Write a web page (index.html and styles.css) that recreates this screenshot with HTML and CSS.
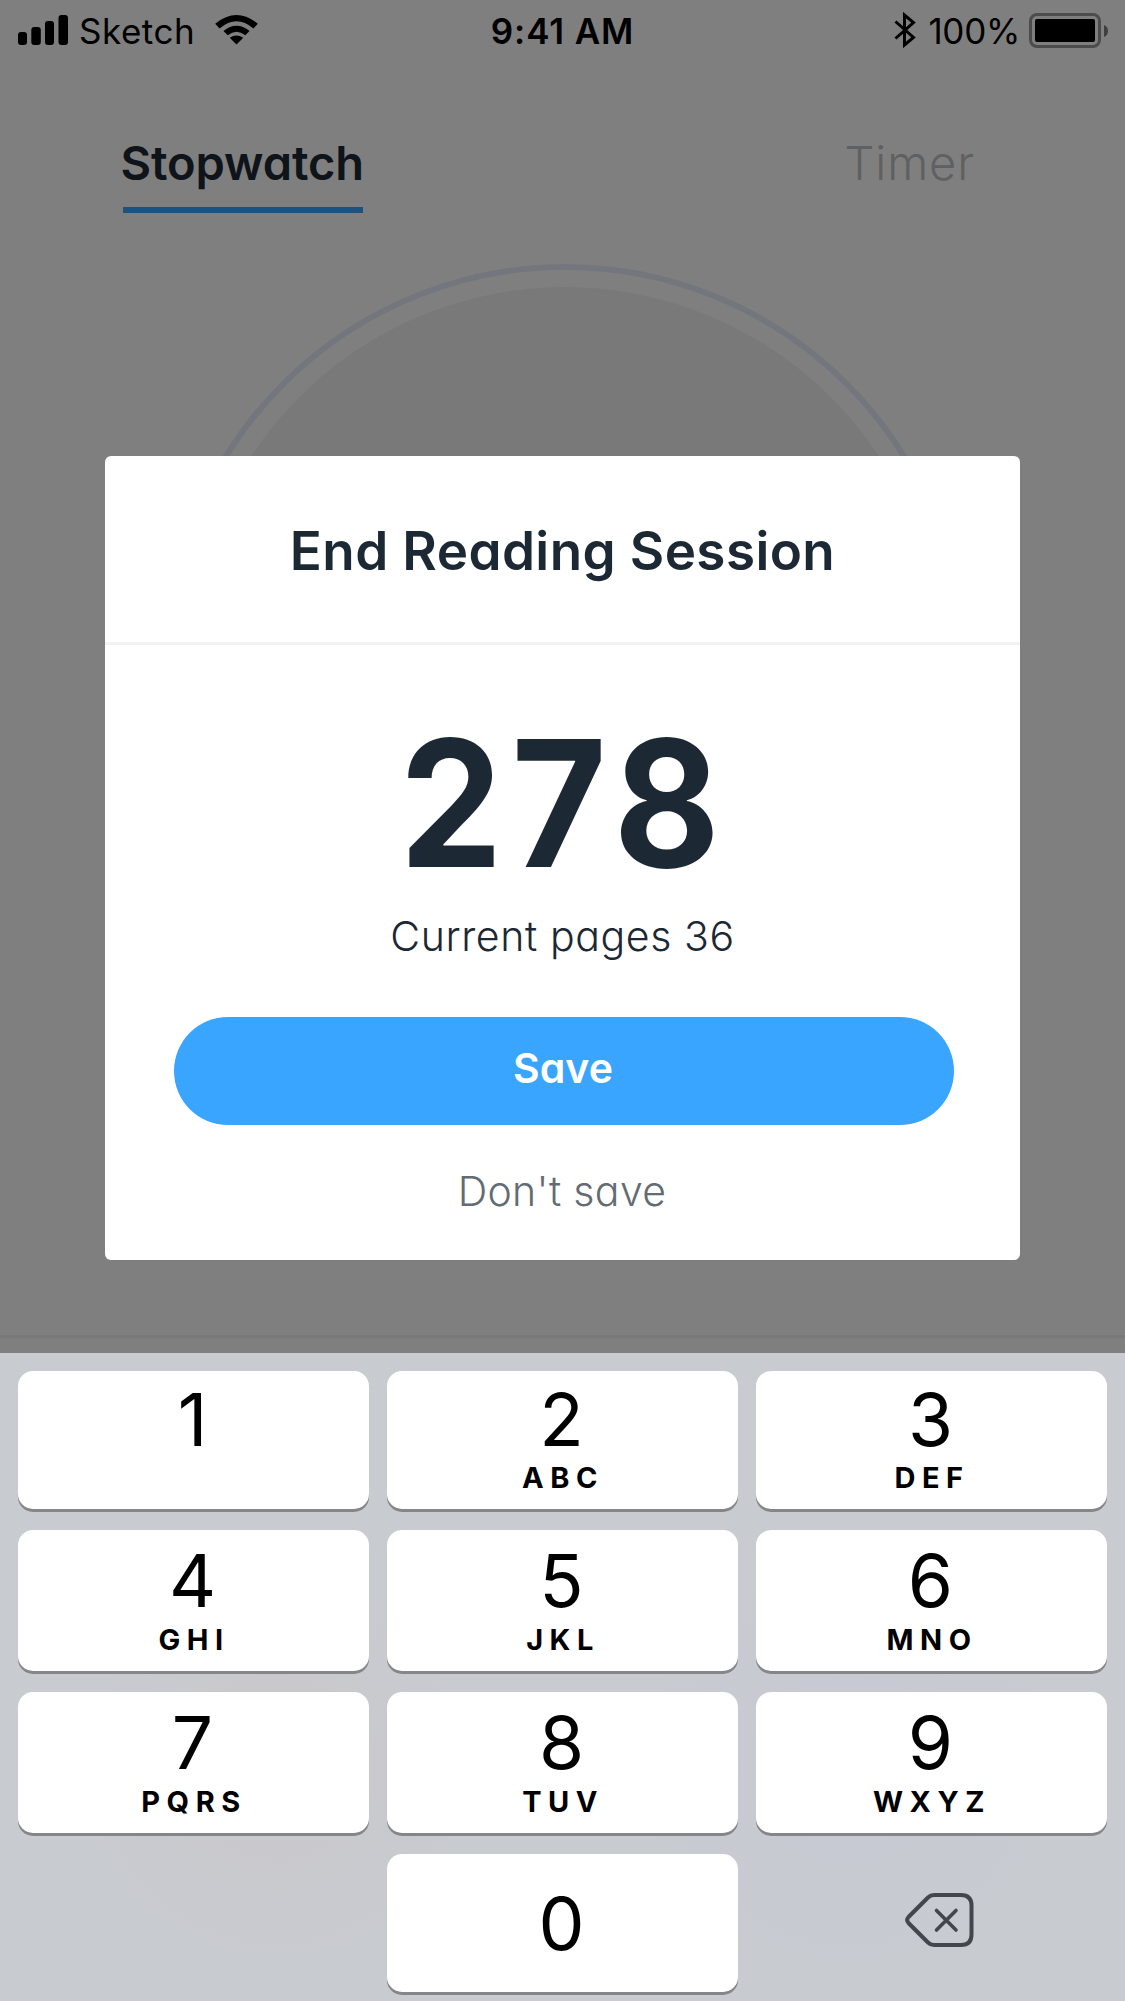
FILE: index.html
```html
<!DOCTYPE html>
<html lang="en">
<head>
<meta charset="utf-8">
<title>End Reading Session</title>
<link rel="stylesheet" href="styles.css">
</head>
<body>
<div class="screen">
  <header class="status">
    <div class="status-side">
      <svg class="signal" width="50" height="30" viewBox="0 0 50 30"><rect x="0" y="17" width="9" height="13" rx="3"/><rect x="13.300" y="12" width="9.500" height="18" rx="3"/><rect x="27" y="6" width="9" height="24" rx="3"/><rect x="40.500" y="0" width="9.500" height="30" rx="3"/></svg>
      <span class="carrier">Sketch</span>
      <svg class="wifi" width="43" height="30" viewBox="0 0 44 31"><path d="M0 9Q22-9 44 9L39.500 14Q22-1 4.500 14Z"/><path d="M8.500 16.500Q22 5.500 35.500 16.500L31 21Q22 13.500 13 21Z"/><path d="M15 23.500Q22 19 29 23.500L22 30.500Z"/></svg>
    </div>
    <span class="clock">9:41 AM</span>
    <div class="status-side status-right">
      <svg class="bluetooth" width="22" height="36" viewBox="0 0 22 36"><path d="M1.500 9.500L19.500 25.500L10.500 33V3L19.500 10.500L1.500 26.500" fill="none" stroke="#000" stroke-width="3"/></svg>
      <span class="percent">100%</span>
      <svg class="battery" width="80" height="35" viewBox="0 0 80 35"><rect x="1.500" y="1.500" width="69" height="32" rx="6.500" fill="none" stroke="#000" stroke-opacity=".4" stroke-width="3"/><rect x="6" y="6" width="60" height="23" rx="2"/><path d="M75 12q4 1.500 4 6t-4 6z" fill-opacity=".5"/></svg>
    </div>
  </header>
  <nav class="tabs">
    <span class="tab tab-active">Stopwatch</span>
    <span class="tab tab-muted">Timer</span>
  </nav>
  <div class="dial">
    <svg width="806" height="806" viewBox="0 0 806 806"><circle cx="403" cy="403" r="398" fill="none" stroke="#e6eefb" stroke-width="6"/><circle cx="403" cy="401" r="376" fill="#f3f3f3"/></svg>
  </div>
  <div class="scrim"></div>
  <section class="modal">
    <h1 class="title">End Reading Session</h1>
    <div class="modal-body">
      <div class="pages"><span class="pages-value">278</span></div>
      <p class="current">Current pages 36</p>
      <button class="save">Save</button>
      <button class="discard">Don't save</button>
    </div>
  </section>
  <div class="keypad">
    <div class="key key-top"><span class="digit">1</span></div>
    <div class="key key-top"><span class="digit">2</span><span class="letters">ABC</span></div>
    <div class="key key-top"><span class="digit">3</span><span class="letters">DEF</span></div>
    <div class="key"><span class="digit">4</span><span class="letters">GHI</span></div>
    <div class="key"><span class="digit">5</span><span class="letters">JKL</span></div>
    <div class="key"><span class="digit">6</span><span class="letters">MNO</span></div>
    <div class="key"><span class="digit">7</span><span class="letters">PQRS</span></div>
    <div class="key"><span class="digit">8</span><span class="letters">TUV</span></div>
    <div class="key"><span class="digit">9</span><span class="letters">WXYZ</span></div>
    <div class="key key-zero"><span class="digit">0</span></div>
    <div class="backspace"><svg width="70" height="56" viewBox="0 0 70 56"><path d="M29 3H56Q66.500 3 66.500 13.500V42.500Q66.500 53 56 53H29Q25.500 53 23 50.500L3.500 31Q0.800 28 3.500 25L23 5.500Q25.500 3 29 3Z" fill="none" stroke="#43474d" stroke-width="4"/><path d="M31.500 18.500L51 38M51 18.500L31.500 38" stroke="#43474d" stroke-width="3.600" stroke-linecap="round"/></svg></div>
  </div>
</div>
</body>
</html>
```

FILE: styles.css
```css
* { box-sizing: border-box; }
body { margin: 0; font-family: Inter, "Liberation Sans", sans-serif; color: #1c2833; }
.screen { position: relative; width: 1125px; height: 2001px; overflow: hidden; display: flex; flex-direction: column; background: #fff; }
.status { display: grid; grid-template-columns: 1fr auto 1fr; height: 62px; padding: 0 16px 0 18px; color: #000; font-size: 35px; line-height: 62px; }
.status-side { display: flex; align-items: flex-start; }
.status-right { justify-content: flex-end; }
.signal { margin: 15px 11px 0 0; }
.carrier { letter-spacing: .5px; }
.wifi { margin: 15px 0 0 20px; }
.clock { font-weight: 600; letter-spacing: .9px; margin-right: 2px; }
.bluetooth { margin: 12px 12px 0 0; }
.percent { letter-spacing: -.3px; }
.battery { margin: 13px 0 0 9px; }

.tabs { display: flex; justify-content: space-between; height: 154px; padding: 65px 150px 0 123px; font-size: 47px; font-feature-settings: "cv11"; }
.tab { height: 86px; line-height: 72px; }
.tab-active { width: 240px; font-weight: 600; text-indent: -2.500px; letter-spacing: -.1px; border-bottom: 6px solid #3aa5ff; white-space: nowrap; }
.tab-muted { font-weight: 300; letter-spacing: .9px; color: #bec0c3; }
.dial { flex: none; display: flex; justify-content: center; height: 1122px; padding: 46px 0 0 5px; border-bottom: 3px solid #f3f3f3; }
.scrim { position: absolute; inset: 0; background: rgba(0, 0, 0, .5); }

.modal { position: absolute; left: 105px; top: 456px; width: 915px; height: 804px; border-radius: 6px; background: #fff; font-feature-settings: "cv11"; }
.title { margin: 0; height: 189px; padding-top: 60px; border-bottom: 3px solid #f3f3f4; font-size: 53px; line-height: 70px; font-weight: 600; letter-spacing: .4px; text-align: center; }
.modal-body { display: flex; flex-direction: column; padding: 58px 66px 0 69px; text-align: center; }
.pages { font-size: 176px; line-height: 200px; font-weight: 700; }
.pages-value { display: inline-block; letter-spacing: 9.700px; transform: scaleX(.93); }
.current { margin: 1px 3px 49px 0; font-size: 41px; line-height: 64px; font-weight: 300; letter-spacing: .6px; }
.save, .discard { border: 0; padding: 0; font: inherit; font-size: 41px; font-feature-settings: inherit; }
.save { height: 108px; padding: 0 2px 6px 0; border-radius: 54px; background: #3aa5ff; color: #fff; font-weight: 600; }
.discard { margin: 36px 4px 0 0; line-height: 60px; background: none; color: #636b73; font-weight: 300; letter-spacing: .35px; }

.keypad { position: relative; flex: none; height: 648px; margin-top: 15px; padding: 18px 18px 9px; display: grid; grid-template-columns: repeat(3, 351px); grid-template-rows: 138px 141px 141px 138px; gap: 21px 18px; background: radial-gradient(circle at 275px 415px, #cac7cb 0, rgba(202, 199, 203, 0) 190px), radial-gradient(circle at 850px 415px, #c6c9d2 0, rgba(198, 201, 210, 0) 210px), #c8cbd0; color: #000; }
.key { display: flex; flex-direction: column; align-items: center; padding-top: 12px; border-radius: 15px; background: #fff; box-shadow: 0 3px 0 #85868a; }
.key-top { padding-top: 10px; }
.digit { margin-right: 2px; font-size: 73px; line-height: 78px; }
.letters { margin-top: 5px; font-size: 29px; line-height: 30px; font-weight: 700; letter-spacing: 6.500px; text-indent: 1px; }
.key-top .letters { margin-top: 4px; }
.key-zero { grid-column: 2; padding-top: 31px; }
.backspace { padding: 37.500px 0 0 149px; }
```
